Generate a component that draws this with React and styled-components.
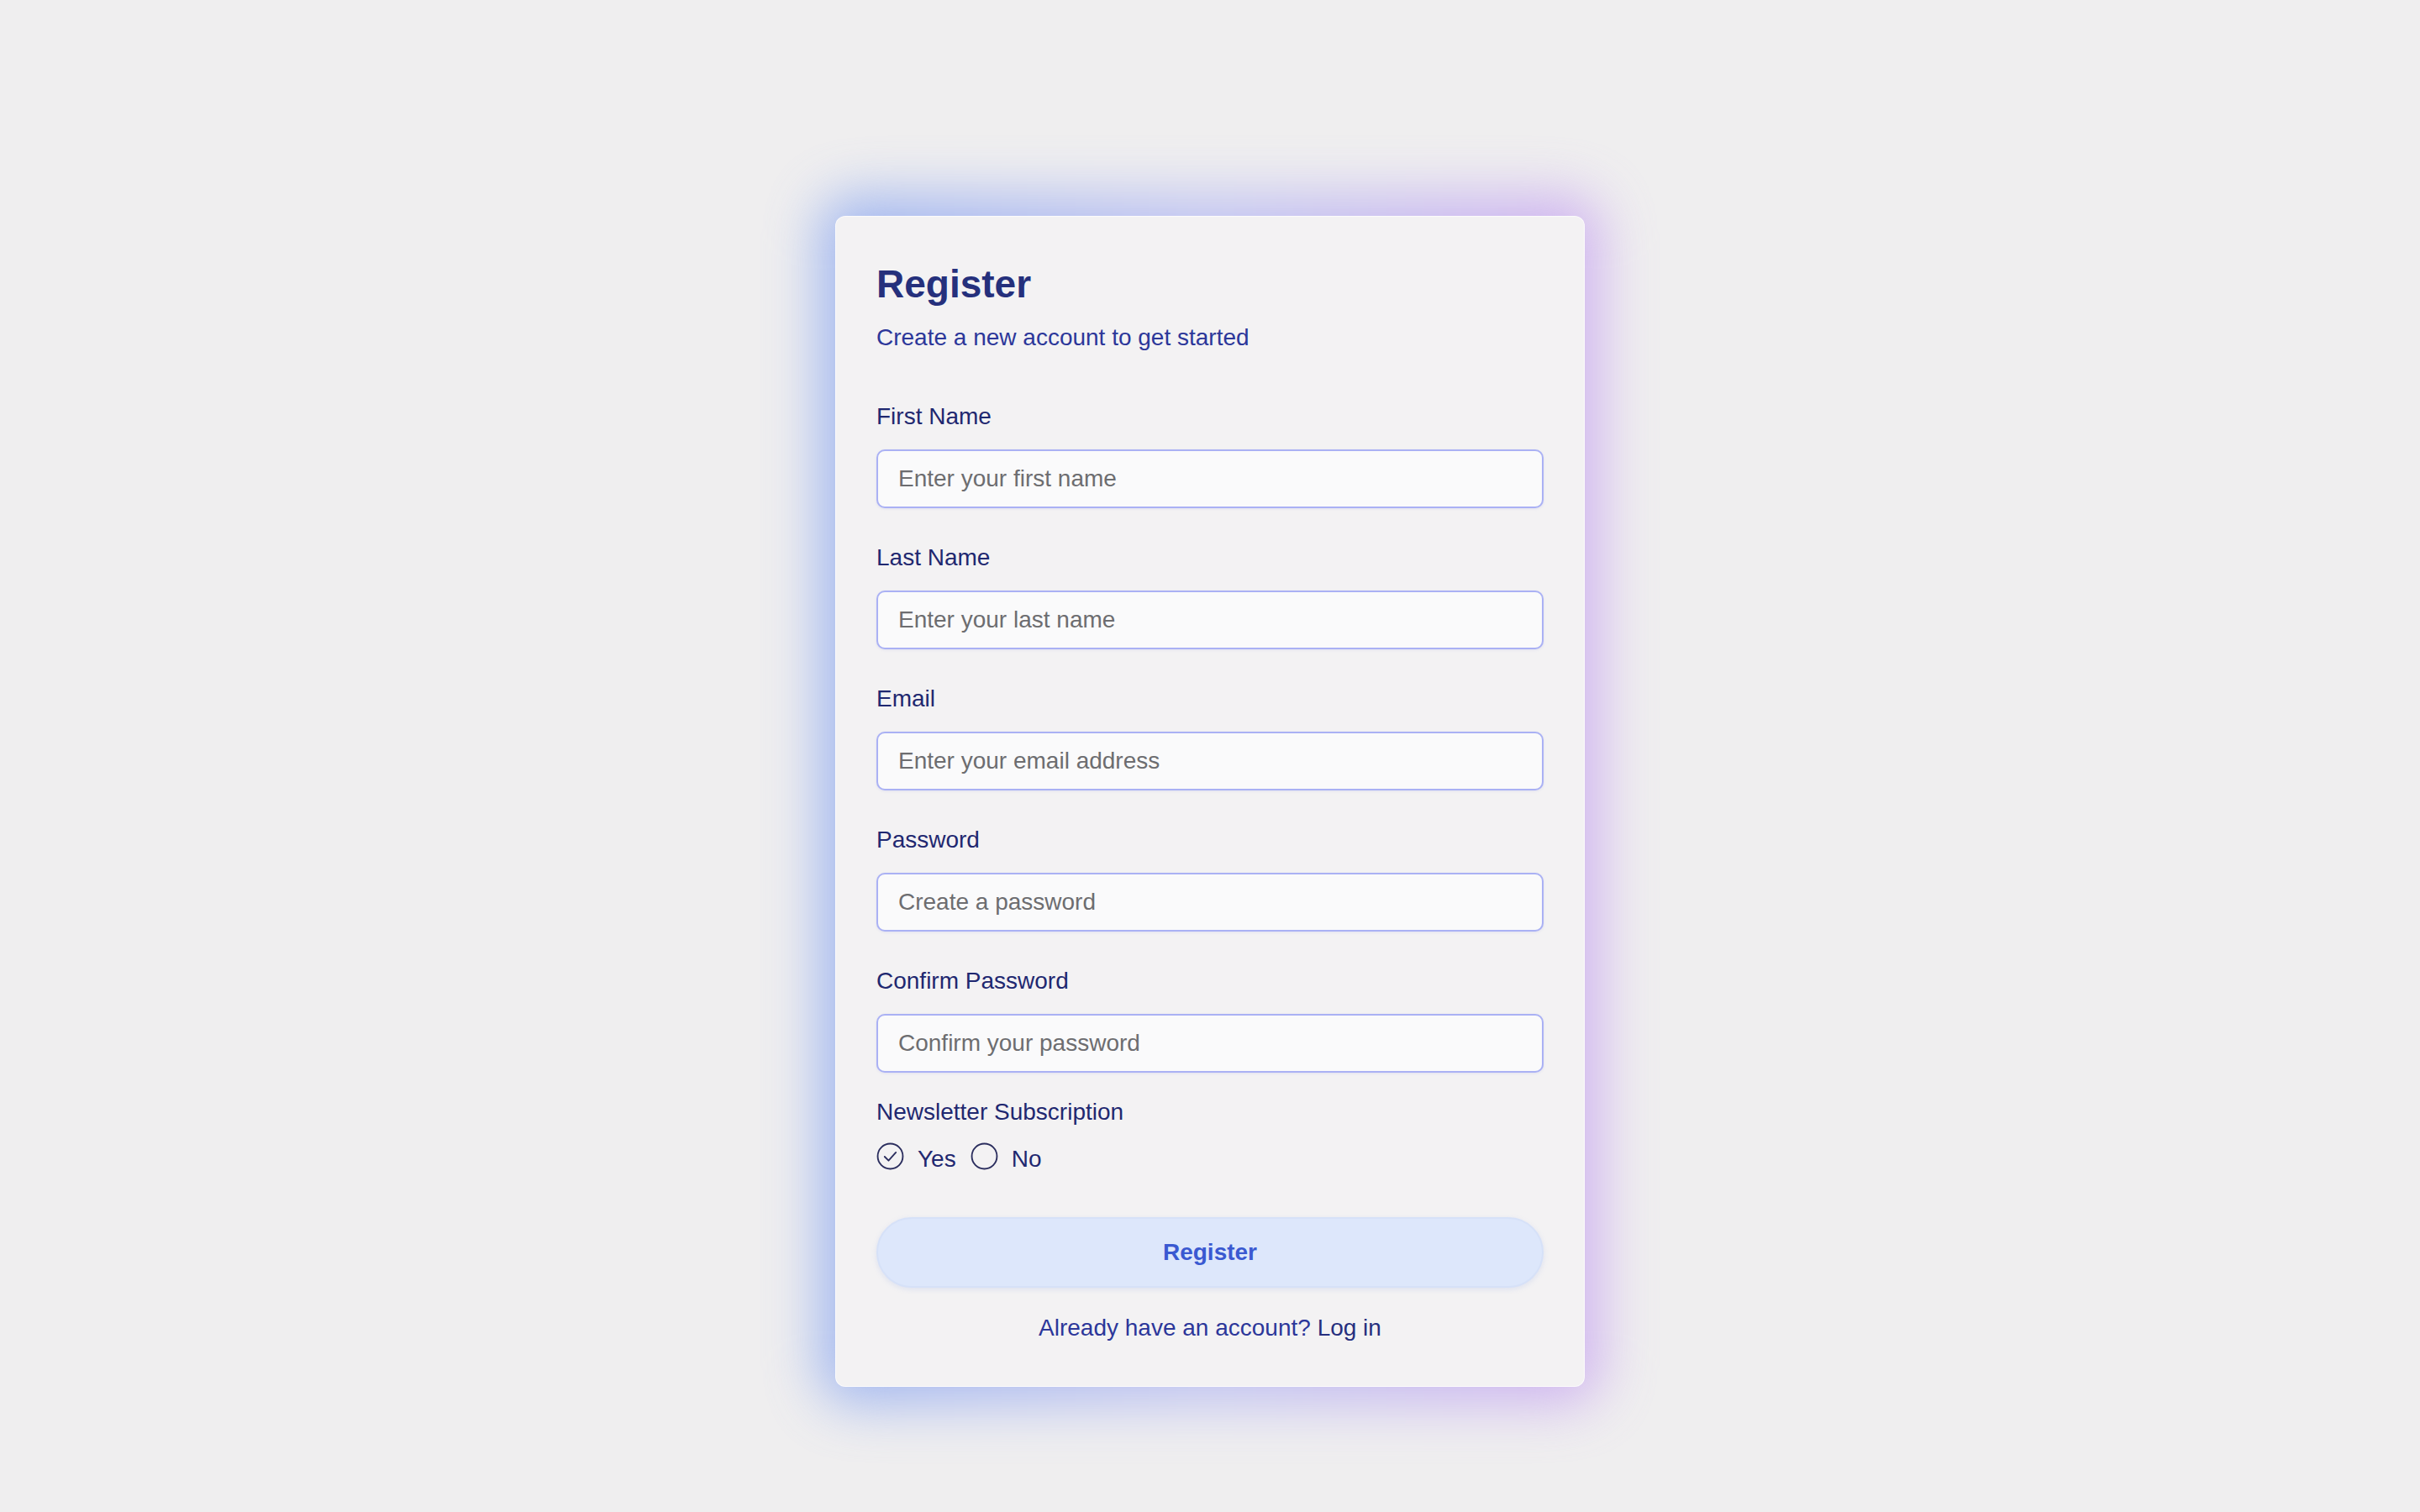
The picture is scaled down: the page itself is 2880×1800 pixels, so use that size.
import React from 'react';
import styled, { createGlobalStyle } from 'styled-components';

const GlobalStyle = createGlobalStyle`
    html {
        background: #efeeef;
    }
    body {
        margin: 0;
        padding: 0;
        font-family: "Liberation Sans", Arial, sans-serif;
    }
    * {
        box-sizing: border-box;
    }
`;

const Page = styled.div`
    min-height: 100vh;
    display: flex;
    justify-content: center;
    align-items: flex-start;
    padding-top: 257px;
`;

const Card = styled.form`
    position: relative;
    width: 892px;
    padding: 52px 48px 49px;
    background: #f3f2f3;
    border-radius: 12px;
    border: 1px solid rgba(255, 255, 255, 0.7);
    display: flex;
    flex-direction: column;

    &::before {
        content: '';
        position: absolute;
        inset: -26px -20px -22px -20px;
        border-radius: 40px;
        background: linear-gradient(90deg, #86a5f0 0%, #b0b5f2 50%, #c7a0f0 100%);
        filter: blur(32px);
        opacity: 0.75;
        z-index: -1;
    }
`;

const Title = styled.h1`
    margin: 0;
    font-size: 46px;
    line-height: 56px;
    font-weight: 700;
    color: #25307c;
`;

const Subtitle = styled.p`
    margin: 16px 0 0;
    font-size: 28px;
    line-height: 40px;
    color: #2c379a;
`;

const Fields = styled.div`
    display: flex;
    flex-direction: column;
    gap: 39px;
    margin-top: 54px;
`;

const Field = styled.div`
    display: flex;
    flex-direction: column;
    gap: 19px;
`;

const Label = styled.label`
    display: block;
    font-size: 28px;
    line-height: 40px;
    color: #1f2870;
`;

const Input = styled.input`
    width: 100%;
    height: 70px;
    padding: 0 24px;
    font-family: inherit;
    font-size: 28px;
    color: #333;
    background: #fafafb;
    border: 2px solid #aab1f4;
    border-radius: 10px;
    box-shadow: 0 1px 3px rgba(120, 130, 220, 0.15);
    outline: none;

    &::placeholder {
        color: #6d6d70;
    }
`;

const Newsletter = styled.div`
    display: flex;
    flex-direction: column;
    gap: 16px;
    margin-top: 27px;
`;

const Options = styled.div`
    display: flex;
    align-items: center;
    gap: 17px;
    height: 40px;
`;

const Option = styled.label`
    display: flex;
    align-items: center;
    gap: 16px;
    font-size: 28px;
    line-height: 40px;
    color: #1f2870;
    cursor: pointer;

    svg {
        margin-bottom: 8px;
    }
`;

const SubmitButton = styled.button`
    margin-top: 49px;
    width: 100%;
    height: 84px;
    border: 2px solid #d6e1f8;
    border-radius: 42px;
    background: #dde7fb;
    color: #3a59d1;
    font-family: inherit;
    font-size: 28px;
    font-weight: 700;
    box-shadow: 0 2px 6px rgba(120, 150, 230, 0.18);
    cursor: pointer;
`;

const Footer = styled.p`
    margin: 28px 0 0;
    text-align: center;
    font-size: 28px;
    line-height: 40px;
    color: #2c379a;
`;

const LoginLink = styled.a`
    color: #262f7e;
    text-decoration: none;
`;

const RadioIcon = ({ checked }) => (
    <svg width="33" height="33" viewBox="0 0 32 32" fill="none" stroke="#2b2e5e" strokeWidth="1.8" strokeLinecap="round" strokeLinejoin="round">
        <circle cx="16" cy="16" r="14.5" />
        {checked && <path d="M9.5 16.5l4.5 4.5 8.5-9.5" />}
    </svg>
);

const fields = [
    { id: 'firstName', label: 'First Name', type: 'text', placeholder: 'Enter your first name' },
    { id: 'lastName', label: 'Last Name', type: 'text', placeholder: 'Enter your last name' },
    { id: 'email', label: 'Email', type: 'email', placeholder: 'Enter your email address' },
    { id: 'password', label: 'Password', type: 'password', placeholder: 'Create a password' },
    { id: 'confirm', label: 'Confirm Password', type: 'password', placeholder: 'Confirm your password' },
];

const App = () => {
    const [subscribe, setSubscribe] = React.useState(true);

    return (
        <Page>
            <GlobalStyle />
            <Card onSubmit={e => e.preventDefault()}>
                <Title>Register</Title>
                <Subtitle>Create a new account to get started</Subtitle>
                <Fields>
                    {fields.map(f => (
                        <Field key={f.id}>
                            <Label htmlFor={f.id}>{f.label}</Label>
                            <Input id={f.id} type={f.type} placeholder={f.placeholder} />
                        </Field>
                    ))}
                </Fields>
                <Newsletter>
                    <Label as="span">Newsletter Subscription</Label>
                    <Options>
                        <Option onClick={() => setSubscribe(true)}>
                            <RadioIcon checked={subscribe} />
                            Yes
                        </Option>
                        <Option onClick={() => setSubscribe(false)}>
                            <RadioIcon checked={!subscribe} />
                            No
                        </Option>
                    </Options>
                </Newsletter>
                <SubmitButton type="submit">Register</SubmitButton>
                <Footer>
                    Already have an account? <LoginLink href="#">Log in</LoginLink>
                </Footer>
            </Card>
        </Page>
    );
};

export default App;
